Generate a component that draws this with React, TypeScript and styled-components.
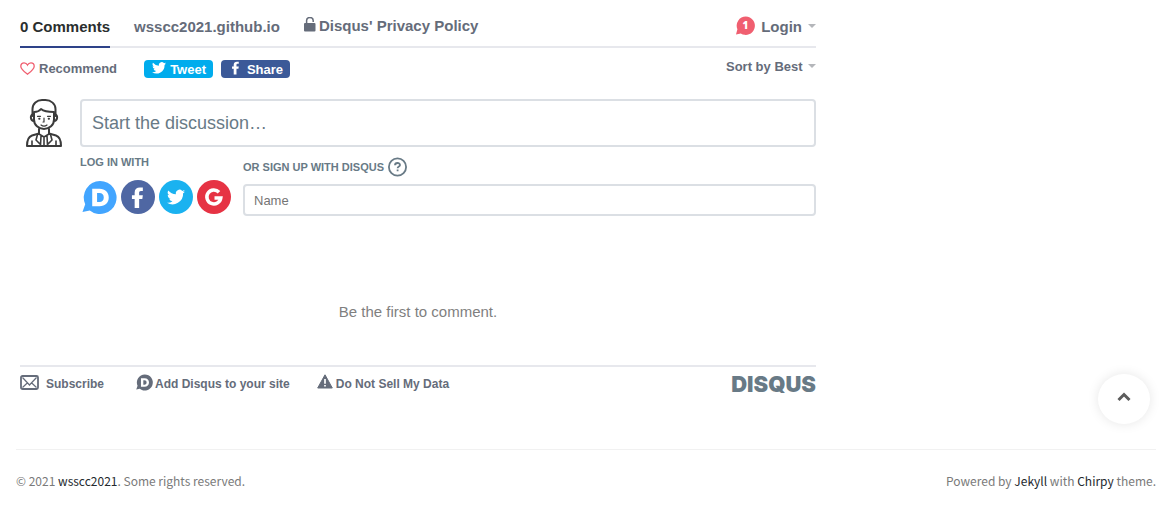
import React from "react";
import styled, { createGlobalStyle } from "styled-components";

const GlobalStyle = createGlobalStyle`
  *, *::before, *::after { box-sizing: border-box; }
  body {
    margin: 0;
    background: #fff;
    color: #656c7a;
    font-family: "Liberation Sans", Arial, sans-serif;
  }
  a { color: inherit; text-decoration: none; }
  button, input, textarea, select { font-family: inherit; }
  button { cursor: pointer; }
  svg { display: block; flex: none; }
`;

const Thread = styled.main`
  max-width: 836px;
  padding: 0 20px;
`;

const TabBar = styled.nav`
  display: flex;
  gap: 24px;
  height: 48px;
  padding-top: 6px;
  border-bottom: 2px solid #e7e8ed;
  font-size: 15px;
  font-weight: 700;
  line-height: 17px;
`;

const Tab = styled.a<{ $active?: boolean }>`
  display: flex;
  align-items: center;
  margin-bottom: -2px;
  border-bottom: 2px solid ${(p) => (p.$active ? "#2e4389" : "transparent")};
  color: ${(p) => (p.$active ? "#2a2e2e" : "#656c7a")};
`;

const PolicyLink = styled(Tab)`
  align-items: flex-start;
  gap: 3px;
  padding-top: 11px;
`;

const LoginButton = styled.button`
  display: flex;
  align-items: center;
  gap: 6px;
  margin-left: auto;
  padding: 0;
  border: 0;
  background: none;
  color: #656c7a;
  font-size: 15px;
  font-weight: 700;
`;

const Caret = styled.span`
  border: 4px solid transparent;
  border-top-color: #b4b6ba;
  border-bottom: 0;
`;

const ActionBar = styled.div`
  display: flex;
  align-items: flex-start;
  height: 51px;
  padding-top: 12px;
`;

const Recommend = styled.button`
  display: flex;
  align-items: center;
  gap: 4px;
  height: 16px;
  margin-right: 27px;
  padding: 0;
  border: 0;
  background: none;
  color: #656c7a;
  font-size: 13px;
  font-weight: 700;
`;

const ShareButton = styled.button<{ $tint: string }>`
  display: flex;
  align-items: center;
  justify-content: space-between;
  width: 69px;
  height: 18px;
  margin-right: 8px;
  padding: 0 7px 0 8px;
  border: 0;
  border-radius: 4px;
  background: ${(p) => p.$tint};
  color: #fff;
  font-size: 13px;
  font-weight: 700;
`;

const SortBox = styled.div`
  display: flex;
  align-items: center;
  gap: 5px;
  height: 12px;
  margin-left: auto;
`;

const SortSelect = styled.select`
  appearance: none;
  padding: 0;
  border: 0;
  background: none;
  color: #656c7a;
  font-size: 13px;
  font-weight: 700;
`;

const Composer = styled.section`
  display: grid;
  grid-template-columns: 48px minmax(0, 1fr);
  column-gap: 12px;
`;

const MessageBox = styled.textarea`
  display: block;
  width: 100%;
  height: 48px;
  padding: 11px 10px;
  border: 2px solid #dbdfe4;
  border-radius: 4px;
  overflow: hidden;
  resize: none;
  font-size: 18px;
  line-height: 22px;
  &::placeholder { color: #687a86; opacity: 1; }
`;

const SignIn = styled.div`
  grid-column: 2;
  display: flex;
  gap: 12px;
`;

const Heading = styled.h2`
  display: flex;
  align-items: center;
  gap: 4px;
  margin: 0;
  color: #687a86;
  font-size: 11px;
  font-weight: 700;
  line-height: 12px;
`;

const Providers = styled.div`
  padding-top: 9px;
`;

const ProviderList = styled.div`
  display: flex;
  gap: 4px;
  padding: 12px 0 0 2px;
`;

const ProviderButton = styled.button`
  width: 34px;
  height: 34px;
  padding: 0;
  border: 0;
  background: none;
  &:first-child { width: 35px; }
`;

const SignUp = styled.div`
  flex: 1;
  padding-top: 10px;
`;

const HelpButton = styled.button`
  width: 20px;
  height: 20px;
  padding: 0;
  border: 0;
  background: none;
`;

const NameInput = styled.input`
  display: block;
  width: 100%;
  height: 32px;
  margin-top: 7px;
  padding: 0 9px;
  border: 2px solid #dbdfe4;
  border-radius: 4px;
  font-size: 13px;
  &::placeholder { color: #757575; opacity: 1; }
`;

const EmptyNote = styled.p`
  margin: 0;
  padding: 87px 0 44px;
  color: #7f7f7f;
  font-size: 15px;
  line-height: 18px;
  text-align: center;
`;

const ThreadFooter = styled.footer`
  display: flex;
  align-items: center;
  height: 36px;
  border-top: 2px solid #e7e8ed;
  font-size: 12px;
  font-weight: 700;
`;

const FooterLink = styled.a<{ $gap: number; $after: number }>`
  display: flex;
  align-items: center;
  gap: ${(p) => p.$gap}px;
  margin-right: ${(p) => p.$after}px;
  svg { margin-bottom: 4px; }
`;

const Wordmark = styled.a`
  margin-left: auto;
  color: #687a86;
  font-family: Inter, sans-serif;
  font-size: 22px;
  font-weight: 900;
  line-height: 24px;
`;

const SiteFooter = styled.footer`
  display: flex;
  justify-content: space-between;
  margin: 48px 17px 0 16px;
  padding-top: 22px;
  border-top: 1px solid #f1f1f1;
  color: #7a7a7a;
  font-family: "Noto Sans CJK SC", sans-serif;
  font-size: 12px;
  line-height: 18px;
  p { margin: 0; }
  a { color: #24292e; }
`;

const BackToTop = styled.button`
  position: fixed;
  right: 23px;
  bottom: 81px;
  display: flex;
  align-items: center;
  justify-content: center;
  width: 52px;
  height: 50px;
  padding: 0 0 4px;
  border: 0;
  border-radius: 50%;
  background: #fff;
  box-shadow: 0 0 12px rgba(0, 0, 0, 0.1);
`;

const BIRD =
  "M24 4.6a10 10 0 0 1-2.8.8 4.9 4.9 0 0 0 2.2-2.7c-1 .6-2 1-3.1 1.2a4.9 4.9 0 0 0-8.4 4.5A14 14 0 0 1 1.7 3.2a4.9 4.9 0 0 0 1.5 6.5 4.9 4.9 0 0 1-2.2-.6v.1a4.9 4.9 0 0 0 3.9 4.8 5 5 0 0 1-2.2.1 4.9 4.9 0 0 0 4.6 3.4A9.9 9.9 0 0 1 0 19.5 14 14 0 0 0 21.5 7.1 10 10 0 0 0 24 4.6z";
const F_MARK =
  "M8.7 24V13.5H5.6V9.4h3.1V6.2C8.700 2.500 11 .5 14.700.5c1.500 0 2.900.1 3.300.2v3.800h-2.100c-1.600 0-2.100.9-2.100 2.100v2.800h4.200l-.6 4.100h-3.600V24z";

const Avatar = () => (
  <svg width="48" height="48" viewBox="0 0 48 48" fill="none" stroke="#3b3b3b" strokeWidth="2" strokeLinejoin="round" strokeLinecap="round" role="img" aria-label="Avatar">
    <path d="M12.500 17V10C12.500 4.500 17 1 22 1h3.500C31 1 35.500 5 35.500 10v7" />
    <path d="M14 13c3 0 5.500-1 7-3 3 2.500 8 3 13 3" />
    <path d="M14 14v6.500c0 5.500 4.500 9.500 10 9.500s10-4 10-9.500V14M13 15.500c-3 0-3 6 1 6.500M35 15.500c3 0 3 6-1 6.500" />
    <path d="M17.500 17.300h3M27.500 17.300h3M24 19v4h-1M21 26c2 1.500 4 1.500 6 0" strokeWidth="1.200" />
    <path d="M19.200 19.700h.3M28.700 19.700h.3" strokeWidth="2" />
    <path d="M19 30v5M29 30v5M19 34.500l-7 2c-3 1-5 4-5 10.500h34c0-6.500-2-9.500-5-10.500l-7-2" />
    <path d="M19 35l5 3 5-3M17.500 35.500L16 41l6 6M30.500 35.500L32 41l-6 6M21 37l-.5 9M27 37l.5 9M24 38v8M12 42v5M36 42v5" strokeWidth="1.600" />
  </svg>
);

const DisqusMark = ({ size, fill }: { size: number; fill: string }) => (
  <svg width={size} height={size} viewBox="0 0 36 36" aria-hidden="true">
    <path fill={fill} d="M18.500 1a17 17 0 1 1-10.500 30.300L.5 33l2.800-8A17 17 0 0 1 18.500 1z" />
    <path fill="#fff" fillRule="evenodd" d="M10.500 9h7.500c6 0 9.500 3.600 9.500 9s-3.500 9-9.500 9h-7.500zM15.500 13.400v9.200H18c2.700 0 4.400-1.600 4.400-4.600s-1.700-4.600-4.400-4.600z" />
  </svg>
);

export default function App() {
  return (
    <>
      <GlobalStyle />
      <Thread>
        <TabBar>
          <Tab href="#comments" $active>0 Comments</Tab>
          <Tab href="#site">wsscc2021.github.io</Tab>
          <PolicyLink href="#privacy">
            <svg width="12" height="16" viewBox="0 0 12 16" aria-hidden="true">
              <path d="M2.600 7V3.500a3.300 3 0 0 1 6.600 0V5" fill="none" stroke="#656c7a" strokeWidth="1.500" />
              <rect y="6" width="11.500" height="8.500" rx="1" fill="#656c7a" />
            </svg>
            Disqus' Privacy Policy
          </PolicyLink>
          <LoginButton type="button">
            <svg width="19" height="20" viewBox="0 0 19 20" aria-hidden="true">
              <path fill="#f05f70" d="M9.800.5a9.200 9.200 0 1 1-5 17L0 18.500l1.400-5.200A9.200 9.200 0 0 1 9.800.5z" />
              <text x="9.500" y="13" textAnchor="middle" fill="#fff" fontFamily="Open Sans" fontSize="10" fontWeight="800">1</text>
            </svg>
            Login
            <Caret />
          </LoginButton>
        </TabBar>

        <ActionBar>
          <Recommend type="button">
            <svg width="15" height="13" viewBox="0 0 15 13" fill="none" stroke="#f05f70" strokeWidth="1.300" aria-hidden="true">
              <path d="M7.500 12.200C4 9.500.8 7.200.8 4.200.8 2.300 2.200.8 4.100.8c1.500 0 2.700.8 3.400 2.200C8.200 1.600 9.400.8 10.900.8c1.900 0 3.300 1.500 3.300 3.400 0 3-3.200 5.300-6.700 8z" />
            </svg>
            Recommend
          </Recommend>
          <ShareButton type="button" $tint="#00aced">
            <svg width="14" height="16" viewBox="0 2 24 24" fill="#fff" aria-hidden="true"><path d={BIRD} /></svg>
            Tweet
          </ShareButton>
          <ShareButton type="button" $tint="#3b5998">
            <svg width="13" height="16" viewBox="0 2 24 24" fill="#fff" aria-hidden="true"><path d={F_MARK} /></svg>
            Share
          </ShareButton>
          <SortBox>
            <SortSelect aria-label="Sort comments">
              <option>Sort by Best</option>
            </SortSelect>
            <Caret />
          </SortBox>
        </ActionBar>

        <Composer>
          <Avatar />
          <MessageBox aria-label="Comment" placeholder="Start the discussion…" />
          <SignIn>
            <Providers>
              <Heading>LOG IN WITH</Heading>
              <ProviderList>
                <ProviderButton type="button" aria-label="Disqus"><DisqusMark size={35} fill="#42a5ff" /></ProviderButton>
                <ProviderButton type="button" aria-label="Facebook">
                  <svg width="34" height="34" viewBox="0 0 34 34">
                    <circle cx="17" cy="17" r="17" fill="#4f67a3" />
                    <path fill="#fff" transform="translate(6 7) scale(.88)" d={F_MARK} />
                  </svg>
                </ProviderButton>
                <ProviderButton type="button" aria-label="Twitter">
                  <svg width="34" height="34" viewBox="0 0 34 34">
                    <circle cx="17" cy="17" r="17" fill="#1ab2f0" />
                    <path fill="#fff" transform="translate(8 8) scale(.75)" d={BIRD} />
                  </svg>
                </ProviderButton>
                <ProviderButton type="button" aria-label="Google">
                  <svg width="34" height="34" viewBox="0 0 34 34">
                    <circle cx="17" cy="17" r="17" fill="#e63344" />
                    <path d="M22 12.200A7 7 0 1 0 23.800 18H17.500" fill="none" stroke="#fff" strokeWidth="3.500" />
                  </svg>
                </ProviderButton>
              </ProviderList>
            </Providers>
            <SignUp>
              <Heading>
                <label htmlFor="name">OR SIGN UP WITH DISQUS</label>
                <HelpButton type="button" aria-label="Help">
                  <svg width="20" height="20" viewBox="0 0 20 20" fill="none" stroke="#687a86" strokeWidth="1.800">
                    <circle cx="9.500" cy="10" r="8.600" />
                    <path d="M7 8.300c0-3 5-3 5-.4 0 1.600-2.400 1.700-2.400 3.400M9.600 12.500v1.800" />
                  </svg>
                </HelpButton>
              </Heading>
              <NameInput id="name" placeholder="Name" />
            </SignUp>
          </SignIn>
        </Composer>

        <EmptyNote>Be the first to comment.</EmptyNote>

        <ThreadFooter>
          <FooterLink href="#subscribe" $gap={6} $after={32}>
            <svg width="20" height="15" viewBox="0 0 20 15" fill="none" stroke="#656c7a" aria-hidden="true">
              <rect x="1" y="1" width="17" height="13" rx="1.500" strokeWidth="1.800" />
              <path d="M2.500 2.500l7 7.500 7-7.500M2.500 12.500L7 8.300M16.500 12.500L12 8.300" strokeWidth="1.200" />
            </svg>
            Subscribe
          </FooterLink>
          <FooterLink href="#add" $gap={2} $after={27}>
            <DisqusMark size={17} fill="#656c7a" />
            Add Disqus to your site
          </FooterLink>
          <FooterLink href="#data" $gap={3} $after={0}>
            <svg width="16" height="16" viewBox="0 0 16 16" aria-hidden="true">
              <path d="M8 .8L15.300 14H.7z" fill="#656c7a" stroke="#656c7a" strokeLinejoin="round" />
              <path d="M8 5v4.800M8 11v1.600" stroke="#fff" strokeWidth="1.700" />
            </svg>
            Do Not Sell My Data
          </FooterLink>
          <Wordmark href="#disqus">DISQUS</Wordmark>
        </ThreadFooter>
      </Thread>

      <SiteFooter>
        <p>© 2021 <a href="#author">wsscc2021</a>. Some rights reserved.</p>
        <p>Powered by <a href="#jekyll">Jekyll</a> with <a href="#chirpy">Chirpy</a> theme.</p>
      </SiteFooter>

      <BackToTop type="button" aria-label="Back to top">
        <svg width="14" height="10" viewBox="0 0 14 10" fill="none" stroke="#5c5c5c" strokeWidth="3" aria-hidden="true">
          <path d="M1.500 8L7 2.500 12.500 8" />
        </svg>
      </BackToTop>
    </>
  );
}
